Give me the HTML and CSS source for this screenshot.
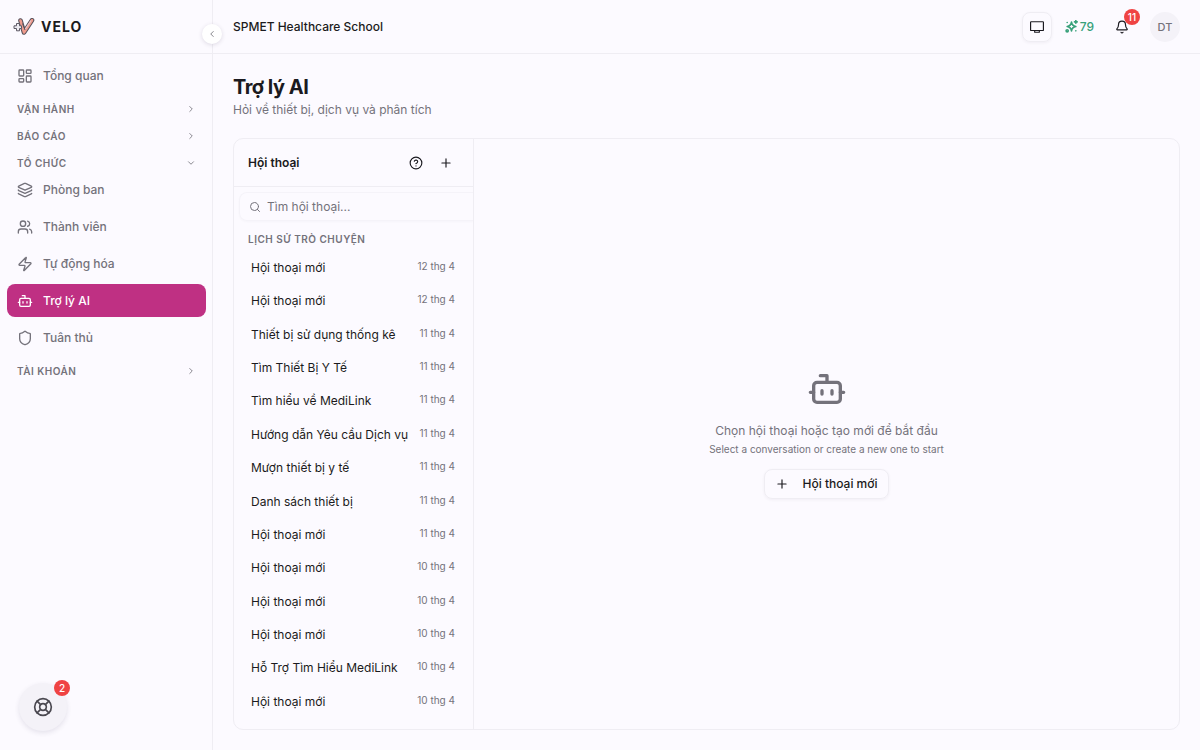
FILE: index.html
```html
<!DOCTYPE html>
<html lang="vi">
<head>
    <meta charset="UTF-8">
    <meta name="viewport" content="width=device-width, initial-scale=1.0">
    <title>Trợ lý AI - VELO</title>
    <link rel="stylesheet" href="styles.css">
</head>
<body>
    <aside class="sidebar">
        <a href="#" class="brand">
            <svg class="logo" viewBox="0 0 22 18">
                <path d="M7.500 2.500 11 14.500 19 2.200" fill="none" stroke="#55515b" stroke-width="4.600" stroke-linecap="round" stroke-linejoin="round"/>
                <path d="M7.500 2.500 11 14.500 19 2.200" fill="none" stroke="#ee9a8c" stroke-width="2.600" stroke-linecap="round" stroke-linejoin="round"/>
                <path d="M12 11.500 18 2.500" fill="none" stroke="#e6c5cb" stroke-width="1.200"/>
                <path d="M9.500 5.500 12 12" fill="none" stroke="#55515b" stroke-width="1"/>
                <path d="M3.500 5.500h3v2.300h2v2.700h-2v2.300h-3v-2.300H1V7.800h2.500z" fill="#eceaf1" stroke="#5d5964" stroke-width="1"/>
            </svg>
            <span class="brand-name">VELO</span>
        </a>
        <button class="collapse" aria-label="Thu gọn">
            <svg class="icon" viewBox="0 0 24 24"><path d="m15 18-6-6 6-6"/></svg>
        </button>

        <nav class="nav">
            <a href="#" class="nav-item">
                <svg class="icon" viewBox="0 0 24 24"><rect width="7" height="9" x="3" y="3" rx="1"/><rect width="7" height="5" x="14" y="3" rx="1"/><rect width="7" height="9" x="14" y="12" rx="1"/><rect width="7" height="5" x="3" y="16" rx="1"/></svg>
                Tổng quan
            </a>
            <button class="nav-group">VẬN HÀNH <svg class="icon" viewBox="0 0 24 24"><path d="m9 18 6-6-6-6"/></svg></button>
            <button class="nav-group">BÁO CÁO <svg class="icon" viewBox="0 0 24 24"><path d="m9 18 6-6-6-6"/></svg></button>
            <div class="nav-section">
                <button class="nav-group">TỔ CHỨC <svg class="icon" viewBox="0 0 24 24"><path d="m6 9 6 6 6-6"/></svg></button>
                <div class="nav-list">
                    <a href="#" class="nav-item">
                        <svg class="icon" viewBox="0 0 24 24"><path d="M12.830 2.180a2 2 0 0 0-1.660 0L2.600 6.080a1 1 0 0 0 0 1.830l8.580 3.910a2 2 0 0 0 1.660 0l8.580-3.900a1 1 0 0 0 0-1.830z"/><path d="M2 12a1 1 0 0 0 .58.910l8.600 3.910a2 2 0 0 0 1.650 0l8.580-3.900A1 1 0 0 0 22 12"/><path d="M2 17a1 1 0 0 0 .58.910l8.600 3.910a2 2 0 0 0 1.650 0l8.580-3.900A1 1 0 0 0 22 17"/></svg>
                        Phòng ban
                    </a>
                    <a href="#" class="nav-item">
                        <svg class="icon" viewBox="0 0 24 24"><path d="M16 21v-2a4 4 0 0 0-4-4H6a4 4 0 0 0-4 4v2"/><circle cx="9" cy="7" r="4"/><path d="M22 21v-2a4 4 0 0 0-3-3.870"/><path d="M16 3.130a4 4 0 0 1 0 7.750"/></svg>
                        Thành viên
                    </a>
                    <a href="#" class="nav-item">
                        <svg class="icon" viewBox="0 0 24 24"><path d="M4 14a1 1 0 0 1-.78-1.630l9.900-10.200a.5.5 0 0 1 .86.460l-1.920 6.020A1 1 0 0 0 13 10h7a1 1 0 0 1 .78 1.630l-9.900 10.200a.5.5 0 0 1-.86-.46l1.920-6.020A1 1 0 0 0 11 14z"/></svg>
                        Tự động hóa
                    </a>
                    <a href="#" class="nav-item active">
                        <svg class="icon" viewBox="0 0 24 24"><path d="M12 8V4H8"/><rect width="16" height="12" x="4" y="8" rx="2"/><path d="M2 14h2M20 14h2M15 13v2M9 13v2"/></svg>
                        Trợ lý AI
                    </a>
                    <a href="#" class="nav-item">
                        <svg class="icon" viewBox="0 0 24 24"><path d="M20 13c0 5-3.500 7.500-7.660 8.950a1 1 0 0 1-.67-.01C7.500 20.500 4 18 4 13V6a1 1 0 0 1 1-1c2 0 4.500-1.200 6.240-2.720a1.170 1.170 0 0 1 1.520 0C14.510 3.810 17 5 19 5a1 1 0 0 1 1 1z"/></svg>
                        Tuân thủ
                    </a>
                </div>
            </div>
            <button class="nav-group">TÀI KHOẢN <svg class="icon" viewBox="0 0 24 24"><path d="m9 18 6-6-6-6"/></svg></button>
        </nav>

        <button class="support" aria-label="Hỗ trợ">
            <svg class="icon" viewBox="0 0 24 24"><circle cx="12" cy="12" r="10"/><path d="m4.930 4.930 4.240 4.240M14.830 9.170l4.240-4.240M14.830 14.830l4.240 4.240M9.170 14.830l-4.240 4.240"/><circle cx="12" cy="12" r="4"/></svg>
            <span class="badge">2</span>
        </button>
    </aside>

    <div class="page">
        <header class="topbar">
            <span class="org">SPMET Healthcare School</span>
            <div class="topbar-actions">
                <button class="square-button" aria-label="Màn hình">
                    <svg class="icon" viewBox="0 0 24 24"><rect width="22" height="15" x="1" y="3" rx="1"/><path d="M8 18v3h8v-3"/></svg>
                </button>
                <a href="#" class="credits">
                    <svg class="icon" viewBox="0 0 24 24"><path d="M12 4c.8 5 3 7.200 8 8-5 .8-7.200 3-8 8-.8-5-3-7.200-8-8 5-.8 7.200-3 8-8z"/><path d="M20 1v5M22.500 3.500h-5"/><circle cx="4" cy="20" r="2"/><path d="M4 4.500h.01M20 20h.01"/></svg>
                    79
                </a>
                <button class="bell" aria-label="Thông báo">
                    <svg class="icon" viewBox="0 0 24 24"><path d="M10.270 21a2 2 0 0 0 3.460 0"/><path d="M3.260 15.330A1 1 0 0 0 4 17h16a1 1 0 0 0 .74-1.670C19.410 13.960 18 12.500 18 8A6 6 0 0 0 6 8c0 4.500-1.410 5.960-2.740 7.330"/></svg>
                    <span class="badge">11</span>
                </button>
                <button class="avatar">DT</button>
            </div>
        </header>

        <main class="content">
            <h1>Trợ lý AI</h1>
            <p class="subtitle">Hỏi về thiết bị, dịch vụ và phân tích</p>

            <div class="card">
                <section class="conversations">
                    <div class="conversations-header">
                        <h2>Hội thoại</h2>
                        <button class="icon-button" aria-label="Trợ giúp"><svg class="icon" viewBox="0 0 24 24"><circle cx="12" cy="12" r="10"/><path d="M9.090 9a3 3 0 0 1 5.830 1c0 2-3 3-3 3M12 17h.01"/></svg></button>
                        <button class="icon-button" aria-label="Tạo mới"><svg class="icon" viewBox="0 0 24 24"><path d="M5 12h14M12 5v14"/></svg></button>
                    </div>
                    <label class="search">
                        <svg class="icon" viewBox="0 0 24 24"><circle cx="11" cy="11" r="8"/><path d="m21 21-4.300-4.300"/></svg>
                        <input type="text" placeholder="Tìm hội thoại..." aria-label="Tìm hội thoại">
                    </label>
                    <h3>LỊCH SỬ TRÒ CHUYỆN</h3>
                    <ul class="history">
                        <li><a href="#">Hội thoại mới</a><time>12 thg 4</time></li>
                        <li><a href="#">Hội thoại mới</a><time>12 thg 4</time></li>
                        <li><a href="#">Thiết bị sử dụng thống kê</a><time>11 thg 4</time></li>
                        <li><a href="#">Tìm Thiết Bị Y Tế</a><time>11 thg 4</time></li>
                        <li><a href="#">Tìm hiểu về MediLink</a><time>11 thg 4</time></li>
                        <li><a href="#">Hướng dẫn Yêu cầu Dịch vụ</a><time>11 thg 4</time></li>
                        <li><a href="#">Mượn thiết bị y tế</a><time>11 thg 4</time></li>
                        <li><a href="#">Danh sách thiết bị</a><time>11 thg 4</time></li>
                        <li><a href="#">Hội thoại mới</a><time>11 thg 4</time></li>
                        <li><a href="#">Hội thoại mới</a><time>10 thg 4</time></li>
                        <li><a href="#">Hội thoại mới</a><time>10 thg 4</time></li>
                        <li><a href="#">Hội thoại mới</a><time>10 thg 4</time></li>
                        <li><a href="#">Hỗ Trợ Tìm Hiểu MediLink</a><time>10 thg 4</time></li>
                        <li><a href="#">Hội thoại mới</a><time>10 thg 4</time></li>
                    </ul>
                </section>

                <section class="empty">
                    <svg class="icon" viewBox="0 0 24 24"><path d="M12 8V4H8"/><rect width="16" height="12" x="4" y="8" rx="2"/><path d="M2 14h2M20 14h2M15 13v2M9 13v2"/></svg>
                    <p>Chọn hội thoại hoặc tạo mới để bắt đầu</p>
                    <p class="hint">Select a conversation or create a new one to start</p>
                    <button class="new-chat">
                        <svg class="icon" viewBox="0 0 24 24"><path d="M5 12h14M12 5v14"/></svg>
                        Hội thoại mới
                    </button>
                </section>
            </div>
        </main>
    </div>
</body>
</html>
```
FILE: styles.css
```css
* {
    margin: 0;
    padding: 0;
    box-sizing: border-box;
}

body {
    display: flex;
    height: 100vh;
    background: #fcfaff;
    color: #1b1a20;
    font-family: Inter, "Noto Sans", sans-serif;
    font-size: 12px;
    line-height: 16px;
}

a {
    color: inherit;
    text-decoration: none;
}

button {
    border: none;
    background: none;
    color: inherit;
    font: inherit;
    cursor: pointer;
}

.icon {
    flex-shrink: 0;
    width: 14px;
    height: 14px;
    fill: none;
    stroke: currentColor;
    stroke-width: 2;
    stroke-linecap: round;
    stroke-linejoin: round;
}

.badge {
    position: absolute;
    min-width: 16px;
    height: 16px;
    border-radius: 8px;
    background: #ef4343;
    color: #fff;
    font-size: 10px;
    font-weight: 500;
    line-height: 16px;
    text-align: center;
}

/* Sidebar */
.sidebar {
    position: relative;
    display: flex;
    flex-direction: column;
    flex-shrink: 0;
    width: 213px;
    border-right: 1px solid #efedf3;
}

.brand {
    display: flex;
    align-items: center;
    gap: 6px;
    height: 54px;
    padding: 0 13px;
    border-bottom: 1px solid #efedf3;
}

.logo {
    width: 22px;
    height: 18px;
}

.brand-name {
    font-size: 14px;
    font-weight: 700;
    letter-spacing: 1px;
}

.collapse {
    position: absolute;
    top: 24px;
    right: -10px;
    display: flex;
    align-items: center;
    justify-content: center;
    width: 20px;
    height: 20px;
    border-radius: 50%;
    background: #fff;
    box-shadow: 0 1px 4px rgba(60, 50, 90, 0.16);
    color: #6f6d76;
}

.collapse .icon {
    width: 10px;
    height: 10px;
}

.nav {
    display: flex;
    flex-direction: column;
    gap: 6px;
    padding: 5px 6px 5px 7px;
}

.nav-list {
    display: flex;
    flex-direction: column;
    gap: 4px;
}

.nav-item {
    display: flex;
    align-items: center;
    gap: 10px;
    height: 33px;
    padding: 0 10px;
    border-radius: 8px;
    color: #74727b;
    font-weight: 500;
}

.nav-item .icon {
    width: 16px;
    height: 16px;
}

.nav-item.active {
    background: #bf3083;
    color: #fff;
}

.nav-group {
    display: flex;
    align-items: center;
    justify-content: space-between;
    width: 100%;
    height: 21px;
    padding: 0 10px;
    color: #74727b;
    font-size: 10px;
    font-weight: 600;
    letter-spacing: 0.05em;
}

.nav-group .icon {
    width: 10px;
    height: 10px;
}

.support {
    position: relative;
    display: flex;
    align-items: center;
    justify-content: center;
    width: 48px;
    height: 48px;
    margin: auto 0 19px 19px;
    border-radius: 50%;
    background: #f4f2f8;
    box-shadow: 0 2px 5px rgba(60, 50, 90, 0.12);
    color: #4a4850;
}

.support .icon {
    width: 20px;
    height: 20px;
}

.support .badge {
    top: -3px;
    right: -3px;
}

/* Top bar */
.page {
    display: flex;
    flex: 1;
    flex-direction: column;
    min-width: 0;
}

.topbar {
    display: flex;
    align-items: center;
    justify-content: space-between;
    height: 54px;
    padding: 0 20px;
    border-bottom: 1px solid #efedf3;
}

.org {
    font-weight: 500;
}

.topbar-actions {
    display: flex;
    align-items: center;
    gap: 13px;
}

.square-button {
    display: flex;
    align-items: center;
    justify-content: center;
    width: 30px;
    height: 30px;
    border: 1px solid #efedf3;
    border-radius: 8px;
    box-shadow: 0 1px 3px rgba(60, 50, 90, 0.06);
}

.credits {
    display: flex;
    align-items: center;
    gap: 2px;
    color: #37a079;
    font-weight: 500;
}

.credits .icon {
    width: 13px;
    height: 13px;
    stroke-width: 3;
}

.bell {
    position: relative;
    display: flex;
    align-items: center;
    justify-content: center;
    width: 30px;
    height: 30px;
}

.bell .badge {
    top: -3px;
    right: -3px;
}

.avatar {
    width: 30px;
    height: 30px;
    border-radius: 50%;
    background: #f4f2f8;
    color: #74727b;
    font-size: 11px;
    font-weight: 500;
}

/* Content */
.content {
    display: flex;
    flex: 1;
    flex-direction: column;
    min-height: 0;
    padding: 20px;
}

h1 {
    margin-bottom: 2px;
    font-size: 20px;
    font-weight: 700;
    line-height: 26px;
    letter-spacing: -0.025em;
}

.subtitle {
    margin-bottom: 20px;
    color: #74727b;
}

.card {
    display: flex;
    flex: 1;
    min-height: 0;
    overflow: hidden;
    border: 1px solid #efedf3;
    border-radius: 10px;
}

.conversations {
    display: flex;
    flex-direction: column;
    flex-shrink: 0;
    width: 240px;
    overflow: hidden;
    border-right: 1px solid #efedf3;
}

.conversations-header {
    display: flex;
    align-items: center;
    gap: 4px;
    height: 48px;
    padding: 0 14px;
    border-bottom: 1px solid #efedf3;
}

.conversations-header h2 {
    flex: 1;
    font-size: 12px;
    font-weight: 600;
}

.icon-button {
    display: flex;
    align-items: center;
    justify-content: center;
    width: 26px;
    height: 26px;
}

.search {
    display: flex;
    align-items: center;
    gap: 6px;
    height: 29px;
    margin: 5px 0 0 5px;
    padding: 0 9px;
    border: 1px solid #f5f3f9;
    border-right: none;
    border-radius: 8px 0 0 8px;
    box-shadow: 0 1px 2px rgba(60, 50, 90, 0.03);
    color: #74727b;
}

.search .icon {
    width: 12px;
    height: 12px;
}

.search input {
    width: 100%;
    border: none;
    outline: none;
    background: none;
    color: inherit;
    font: inherit;
}

.search input::placeholder {
    color: #74727b;
}

h3 {
    margin: 11px 14px 5px;
    color: #74727b;
    font-size: 10px;
    font-weight: 600;
    line-height: 14px;
    letter-spacing: 0.05em;
}

.history {
    display: flex;
    flex: 1;
    flex-direction: column;
    margin-bottom: 11px;
    list-style: none;
}

.history li {
    display: flex;
    flex: 1;
    justify-content: space-between;
    padding: 9px 18px 0 17px;
}

.history time {
    color: #74727b;
    font-size: 10px;
    line-height: 12px;
}

.empty {
    display: flex;
    flex: 1;
    flex-direction: column;
    align-items: center;
    justify-content: center;
    color: #74727b;
}

.empty > .icon {
    width: 40px;
    height: 40px;
    margin-bottom: 14px;
}

.empty .hint {
    margin: 2px 0 12px;
    font-size: 10px;
}

.new-chat {
    display: flex;
    align-items: center;
    gap: 13px;
    height: 30px;
    padding: 0 10px;
    border: 1px solid #efedf3;
    border-radius: 8px;
    box-shadow: 0 1px 3px rgba(60, 50, 90, 0.06);
    color: #1b1a20;
    font-weight: 500;
}
```
